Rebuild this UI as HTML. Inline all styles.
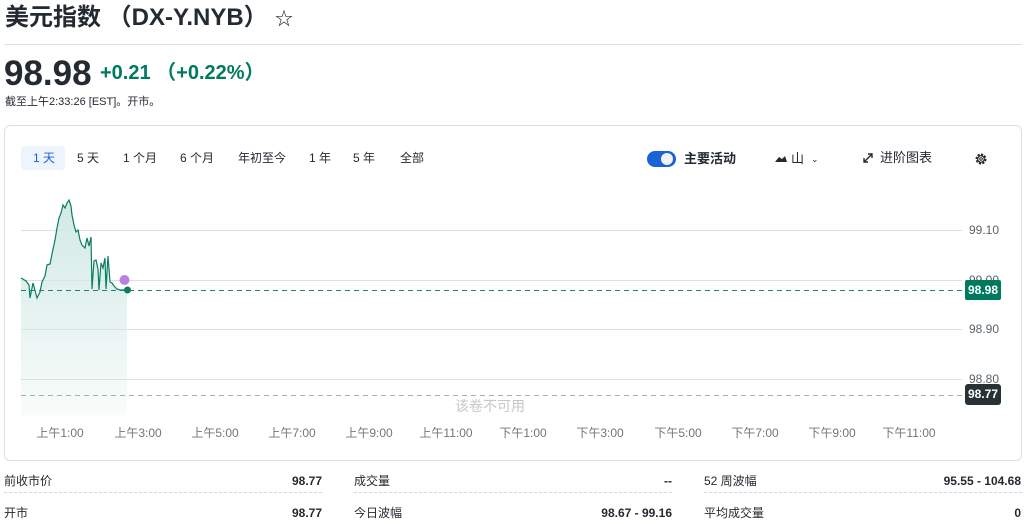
<!DOCTYPE html>
<html><head><meta charset="utf-8"><style>
*{margin:0;padding:0;box-sizing:border-box}
body{width:1028px;height:524px;overflow:hidden;background:#fff;font-family:"Liberation Sans","Noto Sans CJK SC",sans-serif;color:#232a31;position:relative}
.a{position:absolute;white-space:nowrap}
.tab{font-size:12px;top:150px;height:20px;line-height:20px}
.xl{font-size:12px;color:#6e7780;top:424px;transform:translateX(-50%)}
.yl{font-size:12px;color:#5b636a;left:969px}
.tr{font-size:12px;position:absolute;height:20px;line-height:20px}
.dl{position:absolute;height:0;border-top:1px dashed #d5d8db}
</style></head><body>
<div class="a" style="left:5px;top:2px;font-size:24px;font-weight:700;line-height:32px">美元指数 （DX-Y.NYB）</div>
<div class="a" style="left:275px;top:5px;font-size:18px">☆</div>
<div class="a" style="left:4px;top:44px;width:1018px;border-top:1px solid #dcdfe2"></div>
<div class="a" style="left:4px;top:54px;font-size:35px;font-weight:700;line-height:40px">98.98</div>
<div class="a" style="left:100px;top:60px;font-size:20px;font-weight:700;color:#007a5e;line-height:26px">+0.21 （+0.22%）</div>
<div class="a" style="left:5px;top:93px;font-size:11px">截至上午2:33:26 [EST]。开市。</div>
<div class="a" style="left:4px;top:125px;width:1018px;height:336px;border:1px solid #dcdfe2;border-radius:6px"></div>
<div class="a" style="left:21px;top:146px;width:44px;height:24px;background:#edf4fd;border-radius:4px"></div>
<div class="a tab" style="left:33px;top:148px;color:#1b61d7">1 天</div>
<div class="a tab" style="left:77px;top:148px">5 天</div>
<div class="a tab" style="left:123px;top:148px">1 个月</div>
<div class="a tab" style="left:180px;top:148px">6 个月</div>
<div class="a tab" style="left:238px;top:148px">年初至今</div>
<div class="a tab" style="left:309px;top:148px">1 年</div>
<div class="a tab" style="left:353px;top:148px">5 年</div>
<div class="a tab" style="left:400px;top:148px">全部</div>
<div class="a" style="left:647px;top:151px;width:29px;height:16px;background:#1b61d7;border-radius:8px"></div>
<div class="a" style="left:661px;top:153px;width:12px;height:12px;background:#f0f3f6;border-radius:50%"></div>
<div class="a" style="left:684px;top:149px;font-size:13px;font-weight:700;line-height:20px">主要活动</div>
<svg class="a" style="left:775px;top:154px" width="12" height="10"><path d="M0 8 L4 3 L7 5 L10 2 L12 8Z" fill="#232a31"/></svg>
<div class="a" style="left:791px;top:149px;font-size:13px;line-height:20px">山</div>
<div class="a" style="left:811px;top:150px;font-size:9px;line-height:18px">⌄</div>
<svg class="a" style="left:862px;top:152px" width="12" height="12"><path d="M2 10 L10 2 M6 2 H10 V6 M2 6 V10 H6" stroke="#232a31" stroke-width="1.4" fill="none"/></svg>
<div class="a" style="left:880px;top:148px;font-size:13px;line-height:20px">进阶图表</div>
<svg class="a" style="left:974px;top:152px" width="14" height="14" viewBox="0 0 14 14"><circle cx="7" cy="7" r="4.5" fill="none" stroke="#232a31" stroke-width="2" stroke-dasharray="2.2 1.3"/><circle cx="7" cy="7" r="3.3" fill="none" stroke="#232a31" stroke-width="1.2"/><circle cx="7" cy="7" r="1.3" fill="none" stroke="#232a31" stroke-width="1"/></svg>
<svg class="a" style="left:0;top:180px" width="1028" height="240">
<defs><linearGradient id="g" x1="0" y1="0" x2="0" y2="1"><stop offset="0" stop-color="#d2e9e4"/><stop offset="1" stop-color="#d2e9e4" stop-opacity="0.15"/></linearGradient></defs>
<g stroke="#dcdfe3" stroke-width="1"><line x1="21" y1="50.5" x2="962" y2="50.5"/><line x1="21" y1="100.5" x2="962" y2="100.5"/><line x1="21" y1="149.5" x2="962" y2="149.5"/><line x1="21" y1="199.5" x2="962" y2="199.5"/></g>
<path d="M21 98 L26 101 L29 105 L30 118 L33 103 L37 118 L40 112 L42 102 L45 96 L47 85 L50 84 L52 74 L55 60 L57 48 L59 38 L61 33 L63 25 L65 28 L67 23 L69 20 L71 26 L72 35 L74 45 L76 52 L78 50 L80 60 L82 65 L85 68 L87 58 L89 66 L91 57 L92 109 L94 81 L96 80 L98 89 L99 110 L101 83 L103 88 L105 78 L106 109 L108 76 L110 102 L112 103 L114 106 L117 109 L120 110 L127 110 L127 235 L21 235Z" fill="url(#g)"/>
<path d="M21 98 L26 101 L29 105 L30 118 L33 103 L37 118 L40 112 L42 102 L45 96 L47 85 L50 84 L52 74 L55 60 L57 48 L59 38 L61 33 L63 25 L65 28 L67 23 L69 20 L71 26 L72 35 L74 45 L76 52 L78 50 L80 60 L82 65 L85 68 L87 58 L89 66 L91 57 L92 109 L94 81 L96 80 L98 89 L99 110 L101 83 L103 88 L105 78 L106 109 L108 76 L110 102 L112 103 L114 106 L117 109 L120 110 L127 110" fill="none" stroke="#0a7d63" stroke-width="1.2"/>
<line x1="21" y1="110.5" x2="962" y2="110.5" stroke="#168a6e" stroke-dasharray="5 4"/>
<line x1="21" y1="215.5" x2="962" y2="215.5" stroke="#a9adb1" stroke-dasharray="5 4"/>
<circle cx="124.5" cy="100" r="5" fill="#b881de"/>
<circle cx="127.5" cy="110" r="3.5" fill="#0a7d63"/>
</svg>
<div class="a yl" style="top:223px">99.10</div>
<div class="a yl" style="top:273px">99.00</div>
<div class="a yl" style="top:322px">98.90</div>
<div class="a yl" style="top:372px">98.80</div>
<div class="a" style="left:965px;top:280px;width:36px;height:20px;background:#007a5e;color:#fff;font-size:12px;font-weight:700;line-height:20px;text-align:center;border-radius:2px">98.98</div>
<div class="a" style="left:965px;top:384px;width:36px;height:21px;background:#283236;color:#fff;font-size:12px;font-weight:700;line-height:21px;text-align:center;border-radius:3px">98.77</div>
<div class="a" style="left:455px;top:396px;font-size:14px;color:#c4c8cc">该卷不可用</div>
<div class="a xl" style="left:60px">上午1:00</div>
<div class="a xl" style="left:138px">上午3:00</div>
<div class="a xl" style="left:215px">上午5:00</div>
<div class="a xl" style="left:292px">上午7:00</div>
<div class="a xl" style="left:369px">上午9:00</div>
<div class="a xl" style="left:446px">上午11:00</div>
<div class="a xl" style="left:523px">下午1:00</div>
<div class="a xl" style="left:600px">下午3:00</div>
<div class="a xl" style="left:678px">下午5:00</div>
<div class="a xl" style="left:755px">下午7:00</div>
<div class="a xl" style="left:832px">下午9:00</div>
<div class="a xl" style="left:909px">下午11:00</div>
<div class="tr" style="left:4px;top:471px">前收市价</div><div class="tr" style="left:200px;width:122px;text-align:right;top:471px;font-weight:700">98.77</div>
<div class="tr" style="left:354px;top:471px">成交量</div><div class="tr" style="left:550px;width:122px;text-align:right;top:471px;font-weight:700">--</div>
<div class="tr" style="left:704px;top:471px">52 周波幅</div><div class="tr" style="left:850px;width:171px;text-align:right;top:471px;font-weight:700">95.55 - 104.68</div>
<div class="dl" style="left:4px;top:492px;width:318px"></div>
<div class="dl" style="left:354px;top:492px;width:318px"></div>
<div class="dl" style="left:704px;top:492px;width:318px"></div>
<div class="tr" style="left:4px;top:503px">开市</div><div class="tr" style="left:200px;width:122px;text-align:right;top:503px;font-weight:700">98.77</div>
<div class="tr" style="left:354px;top:503px">今日波幅</div><div class="tr" style="left:550px;width:122px;text-align:right;top:503px;font-weight:700">98.67 - 99.16</div>
<div class="tr" style="left:704px;top:503px">平均成交量</div><div class="tr" style="left:850px;width:171px;text-align:right;top:503px;font-weight:700">0</div>
</body></html>
